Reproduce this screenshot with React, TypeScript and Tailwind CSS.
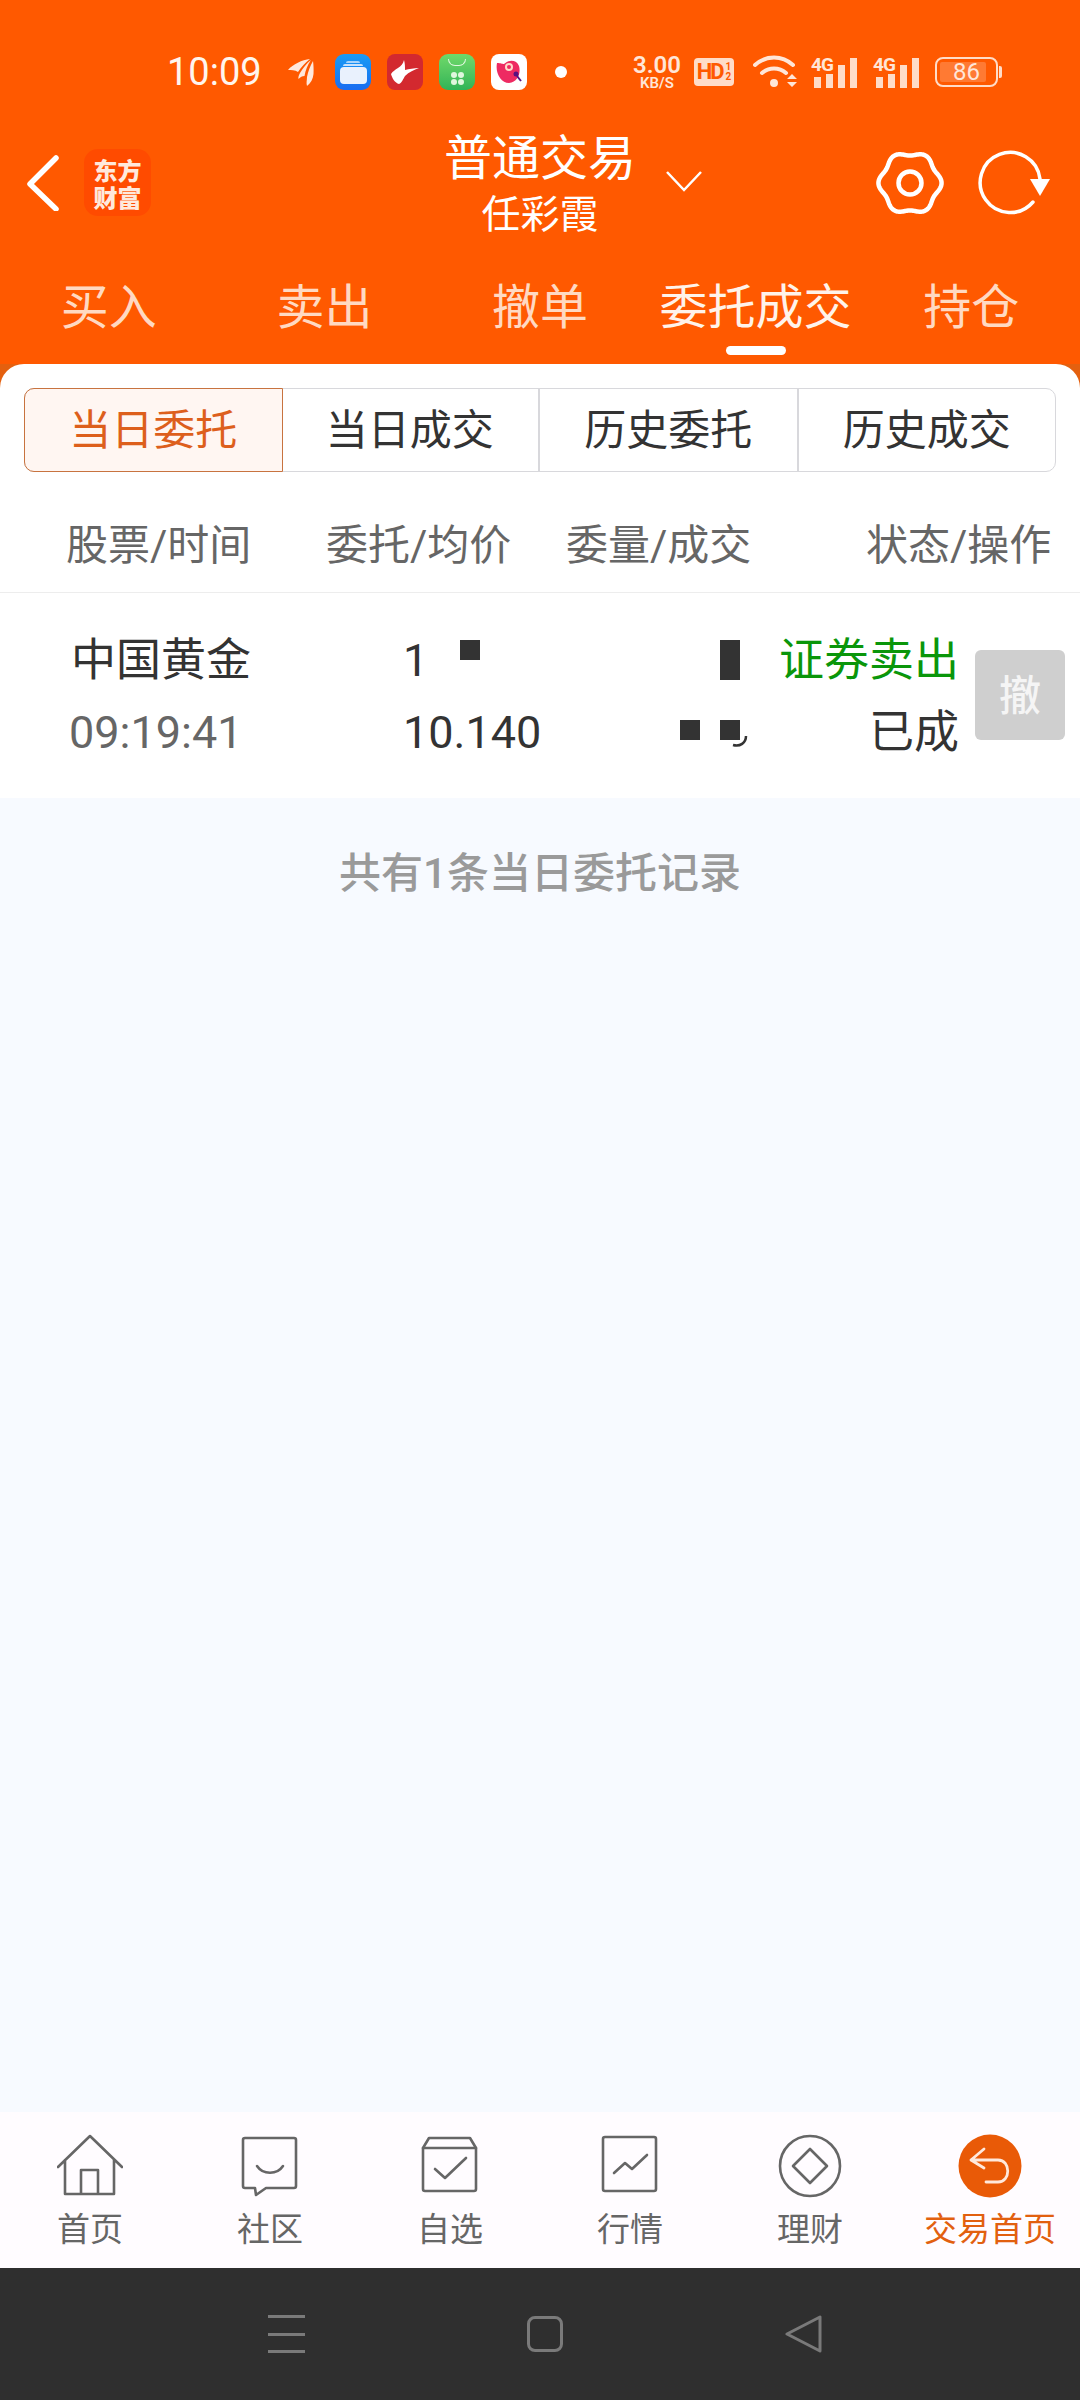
import React from "react";

const FONT = "font-['Roboto','Noto_Sans_CJK_SC',sans-serif]";

// six soft lobes, same outline as the app's settings icon
function gearPath(cx: number, cy: number, r: number, depth: number) {
  const pts: string[] = [];
  for (let i = 0; i < 180; i++) {
    const a = (i / 180) * Math.PI * 2;
    const rr = r * (1 + depth * Math.cos(6 * a));
    pts.push(`${(cx + rr * Math.cos(a)).toFixed(2)} ${(cy + rr * Math.sin(a)).toFixed(2)}`);
  }
  return `M${pts.join("L")}Z`;
}

function Signal({ className }: { className: string }) {
  return (
    <div className={`relative h-[31px] w-[46px] ${className}`}>
      <span className="absolute left-0 top-0 text-[19px] font-bold leading-[15px] tracking-[-1px] text-[#ffe6d8]">4G</span>
      <div className="absolute bottom-0 left-[3px] flex items-end gap-[5px]">
        <div className="h-[11px] w-[7px] bg-[#ffdcc8]" />
        <div className="h-[14px] w-[7px] bg-[#ffdcc8]" />
        <div className="h-[23px] w-[7px] bg-[#ffdcc8]" />
        <div className="h-[30px] w-[7px] bg-[#ffdcc8]" />
      </div>
    </div>
  );
}

function StatusBar() {
  return (
    <div className="flex h-[130px] items-center pl-[167px] pt-[14px] text-white">
      <span className="w-[96px] text-[38px] leading-none text-[#fff5ee]">10:09</span>
      <svg className="ml-[25px]" width="28" height="28" viewBox="0 0 28 28" fill="#ffe9dc">
        <path d="M22 1C14 2 5 6 0 12c3 0 7 0 10 2 3-5 7-9 12-13z" />
        <path d="M23 2c-4 3-8 8-11 13-1 2-2 4-1.500 6 2-2 3.500-3 6-3 1-6 3-11 6.500-16z" />
        <path d="M25 3c-3 5-5 11-6 16 0 3-1 6 0 9 4-3 6-7 6.500-12 .3-5 0-9-.5-13z" />
      </svg>
      <div className="ml-[19px] flex h-[36px] w-[36px] flex-col items-center justify-end rounded-[9px] bg-gradient-to-b from-[#1b9bf5] to-[#1a6cf0] pb-[6px]">
        <div className="mb-[1px] h-[2px] w-[14px] rounded-t-[2px] bg-[#a9d4fb]" />
        <div className="mb-[1px] h-[2px] w-[20px] rounded-t-[2px] bg-[#c8e2fc]" />
        <div className="h-[17px] w-[27px] rounded-[4px] bg-[#e9f1fd]" />
      </div>
      <div className="ml-[16px] flex h-[36px] w-[36px] items-center justify-center rounded-[8px] bg-[#d3292f]">
        <svg width="30" height="26" viewBox="0 0 30 26" fill="#fff">
          <path d="M14 1C13 5 11 7 8 9c-3 2-5 3-7 6 1 4 4 9 8 10 3-1 4-5 6-8 4-4 9-6 14-8-5 0-10 1-14 2 0-3 0-7-1-10z" />
        </svg>
      </div>
      <div className="ml-[16px] flex h-[36px] w-[36px] flex-col items-center rounded-[9px] bg-gradient-to-b from-[#6fd96a] to-[#2fb457] pt-[5px]">
        <div className="h-[7px] w-[18px] rounded-b-full border-x border-b border-[#dff7dd]" />
        <div className="mt-[6px] grid grid-cols-2 gap-[1px]">
          <div className="h-[6px] w-[6px] rounded-full bg-[#dff7dd]" />
          <div className="h-[6px] w-[6px] rounded-full bg-[#dff7dd]" />
          <div className="h-[6px] w-[6px] rounded-full bg-[#dff7dd]" />
          <div className="h-[6px] w-[6px] rounded-full bg-[#dff7dd]" />
        </div>
      </div>
      <div className="ml-[16px] flex h-[36px] w-[36px] items-center justify-center rounded-[8px] bg-white">
        <svg width="30" height="30" viewBox="0 0 30 30">
          <path d="M3 6c4 0 5 1 7 1 5-5 13-4 15 2 2 7-1 16-10 17C7 26 1 16 3 6z" fill="#ee2a62" />
          <circle cx="15" cy="10" r="4" fill="#ffd9c9" />
          <circle cx="15" cy="10" r="2" fill="#ee2a62" />
          <circle cx="22" cy="17" r="2.500" fill="#5a1080" />
          <path d="m23 19 4 5" stroke="#5a1080" strokeWidth="2" />
        </svg>
      </div>
      <div className="ml-[28px] h-[12px] w-[12px] rounded-full bg-white" />
      <div className="ml-[65px] flex w-[50px] flex-col items-center font-semibold text-[#ffe6d8]">
        <span className="text-[24px] leading-[22px]">3.00</span>
        <span className="text-[15px] leading-[15px]">KB/S</span>
      </div>
      <div className="ml-[12px] flex h-[28px] w-[40px] items-center justify-center rounded-[4px] bg-[#ffdcc8] text-[22px] font-bold leading-none tracking-[-2px] text-[#ff5900]">
        HD
        <span className="ml-[3px] text-[10px] leading-[10px] tracking-normal">
          1
          <br />2
        </span>
      </div>
      <svg className="ml-[19px]" width="44" height="34" viewBox="0 0 44 34" fill="none" stroke="#ffe6d8" strokeWidth="4" strokeLinecap="round">
        <path d="M2 10c11-10 27-10 38 0" />
        <path d="M9 18c7-6 17-6 24 0" />
        <circle cx="21" cy="28" r="2" fill="#ffe6d8" />
        <path d="m34 24 5-5 5 5zM34 27l5 5 5-5z" fill="#ffe6d8" stroke="none" />
      </svg>
      <Signal className="ml-[14px]" />
      <Signal className="ml-[16px]" />
      <div className="relative ml-[16px] flex h-[30px] w-[63px] items-center rounded-[8px] border-2 border-[#ffdcc8] p-[3px]">
        <div className="h-full w-[46px] rounded-[2px] bg-[#ff7a33]" />
        <span className="absolute inset-x-0 text-center text-[24px] leading-none text-[#ffe6d8]">86</span>
      </div>
      <div className="ml-[1px] h-[12px] w-[3px] rounded-r-[2px] bg-[#ffdcc8]" />
    </div>
  );
}

function Header() {
  return (
    <div className="relative flex h-[112px] items-start">
      <svg className="ml-[26px] mt-[25px]" width="34" height="56" viewBox="0 0 34 56" fill="none" stroke="#fff" strokeWidth="5.500" strokeLinecap="round" strokeLinejoin="round">
        <path d="M30 3 4 29l26 25" />
      </svg>
      <div className="ml-[24px] mt-[19px] flex h-[67px] w-[67px] items-center justify-center rounded-[14px] bg-[#ff4b00] text-center font-['Noto_Sans_CJK_SC',serif] text-[24px] font-black leading-[27px] text-[#ffe9dc]">
        东方
        <br />
        财富
      </div>
      <div className="absolute left-[440px] top-0 flex w-[200px] flex-col items-center text-white">
        <span className="text-[48px] leading-[58px]">普通交易</span>
        <span className="mt-[5px] text-[39px] leading-[44px]">任彩霞</span>
      </div>
      <svg className="absolute left-[666px] top-[41px]" width="36" height="22" viewBox="0 0 36 22" fill="none" stroke="#fff" strokeWidth="2.500">
        <path d="m1 1 17 18L35 1" />
      </svg>
      <svg className="absolute left-[876px] top-[19px]" width="68" height="68" viewBox="0 0 68 68" fill="none" stroke="#fff" strokeWidth="4.500" strokeLinejoin="round">
        <path d={gearPath(34, 34, 29.500, 0.07)} />
        <circle cx="34" cy="34" r="11.500" />
      </svg>
      <svg className="absolute left-[978px] top-[20px]" width="74" height="68" viewBox="0 0 74 68" fill="none">
        <path d="M55 52A30 30 0 1 1 62 29" stroke="#fff" strokeWidth="3.500" strokeLinecap="round" />
        <path d="M52 29h20l-10 17z" fill="#fff" />
      </svg>
    </div>
  );
}

function TopTabs() {
  const tabs = ["买入", "卖出", "撤单", "委托成交", "持仓"];
  return (
    <div className="grid h-[122px] grid-cols-5 px-[1px]">
      {tabs.map((t) => {
        const active = t === "委托成交";
        return (
          <div key={t} className="flex flex-col items-center pt-[36px]">
            <span className={`text-[48px] leading-[60px] ${active ? "text-[#fff3ea]" : "text-[#ffd9c2]"}`}>{t}</span>
            {active && <div className="mt-[8px] h-[9px] w-[60px] rounded-full bg-white" />}
          </div>
        );
      })}
    </div>
  );
}

function Segments() {
  const items = ["当日委托", "当日成交", "历史委托", "历史成交"];
  return (
    <div className="mx-[24px] flex h-[84px] rounded-[10px] border border-[#d8d8dc]">
      {items.map((t, i) => (
        <div
          key={t}
          className={`flex flex-1 items-center justify-center text-[42px] ${
            i === 0
              ? "-m-[1px] rounded-l-[10px] border border-[#c8733f] bg-[#fff6f2] text-[#dd5f1c]"
              : i === 1
                ? "text-[#333]"
                : "border-l-2 border-[#d8d8dc] text-[#333]"
          }`}
        >
          {t}
        </div>
      ))}
    </div>
  );
}

function OrderRow() {
  return (
    <div className="relative flex h-[206px] border-t border-[#ededed] bg-white text-[45px] leading-[50px] text-[#333]">
      <div className="ml-[71px] mt-[43px] flex w-[333px] flex-col gap-[22px]">
        <span>中国黄金</span>
        <span className="-ml-[2px] text-[#666]">09:19:41</span>
      </div>
      <div className="-ml-[1px] mt-[43px] flex w-[200px] flex-col gap-[22px]">
        <span>1</span>
        <span>10.140</span>
      </div>
      <div className="mt-[43px] flex w-[356px] flex-col items-end gap-[22px]">
        <span className="text-[#0a960a]">证券卖出</span>
        <span>已成</span>
      </div>
      <div className="absolute left-[975px] top-[57px] flex h-[90px] w-[90px] items-center justify-center rounded-[6px] bg-[#cfcfcf] pt-[3px] text-[42px] font-medium text-[#f5f5f5]">
        撤
      </div>
      {/* masked digits in the source capture */}
      <div className="absolute left-[460px] top-[47px] h-[20px] w-[20px] bg-[#333]" />
      <div className="absolute left-[720px] top-[47px] h-[40px] w-[20px] bg-[#333]" />
      <div className="absolute left-[680px] top-[127px] h-[20px] w-[20px] bg-[#333]" />
      <div className="absolute left-[720px] top-[127px] h-[20px] w-[20px] bg-[#333]" />
      <svg className="absolute left-[730px] top-[141px]" width="20" height="16" viewBox="0 0 20 16" fill="none" stroke="#333" strokeWidth="2.500">
        <path d="M16 2c0 7-6 11-13 9" />
      </svg>
    </div>
  );
}

function NavIcon({ name }: { name: string }) {
  const stroke = { fill: "none", stroke: "#666", strokeWidth: 2.600, strokeLinejoin: "round" as const, strokeLinecap: "round" as const };
  if (name === "首页")
    return (
      <svg width="66" height="66" viewBox="0 0 66 66" {...stroke}>
        <path d="M1 34 33 3l32 31M8 27v34h49V27M24 61V37h17v24" />
      </svg>
    );
  if (name === "社区")
    return (
      <svg width="66" height="66" viewBox="0 0 66 66" {...stroke}>
        <path d="M8 5h49a2 2 0 0 1 2 2v46a2 2 0 0 1-2 2H29l-10 7-1-7H8a2 2 0 0 1-2-2V7a2 2 0 0 1 2-2z" />
        <path d="M20 33c6 9 20 9 26 0" />
      </svg>
    );
  if (name === "自选")
    return (
      <svg width="66" height="66" viewBox="0 0 66 66" {...stroke}>
        <path d="M6 15v41a2 2 0 0 0 2 2h49a2 2 0 0 0 2-2V15z" />
        <path d="m6 15 6-10h41l6 10" />
        <path d="m18 36 10 9 21-20" />
      </svg>
    );
  if (name === "行情")
    return (
      <svg width="66" height="66" viewBox="0 0 66 66" {...stroke}>
        <rect x="6" y="4" width="53" height="54" rx="2" />
        <path d="m17 40 11-10 7 6 15-14" />
      </svg>
    );
  if (name === "理财")
    return (
      <svg width="66" height="66" viewBox="0 0 66 66" {...stroke}>
        <circle cx="33" cy="33" r="30" />
        <path d="m33 16 17 17-17 17-17-17z" />
      </svg>
    );
  return (
    <svg width="66" height="66" viewBox="0 0 66 66">
      <circle cx="33" cy="33" r="31.500" fill="#e95a07" />
      <path d="M27 16 14 27l13 8M14 27h27c13 0 13 22 0 22H29" fill="none" stroke="#ffe9dc" strokeWidth="2.800" strokeLinecap="round" strokeLinejoin="round" />
    </svg>
  );
}

function BottomNav() {
  const items = ["首页", "社区", "自选", "行情", "理财", "交易首页"];
  return (
    <div className="grid h-[156px] grid-cols-6 bg-[#fffcff]">
      {items.map((t) => (
        <div key={t} className="flex flex-col items-center">
          <div className="mt-[21px] h-[66px]">
            <NavIcon name={t} />
          </div>
          <span className={`mt-[9px] text-[33px] leading-[44px] ${t === "交易首页" ? "text-[#e2600f]" : "text-[#666]"}`}>{t}</span>
        </div>
      ))}
    </div>
  );
}

function SystemBar() {
  return (
    <div className="flex h-[132px] items-center bg-[#2f2f2f]">
      <div className="ml-[268px] flex h-[38px] w-[37px] flex-col justify-between">
        <div className="h-[3px] bg-[#7a7a7a]" />
        <div className="h-[3px] bg-[#7a7a7a]" />
        <div className="h-[3px] bg-[#7a7a7a]" />
      </div>
      <div className="ml-[222px] h-[36px] w-[36px] rounded-[8px] border-[3px] border-[#7a7a7a]" />
      <svg className="ml-[222px]" width="38" height="38" viewBox="0 0 38 38" fill="none" stroke="#7a7a7a" strokeWidth="3" strokeLinejoin="round">
        <path d="M2 19 35 2v34z" />
      </svg>
    </div>
  );
}

export default function App() {
  return (
    <div className={`flex h-[2400px] w-[1080px] flex-col overflow-hidden bg-[#f7faff] ${FONT}`}>
      <div className="bg-[#ff5900]">
        <StatusBar />
        <Header />
        <TopTabs />
      </div>
      {/* the darker orange only shows through the rounded corners */}
      <div className="bg-[#e4600f]">
        <div className="rounded-t-[24px] bg-white pt-[24px]">
          <Segments />
          <div className="grid h-[120px] grid-cols-[266px_240px_264px_1fr] items-center whitespace-nowrap pt-[26px] text-[42px] text-[#666]">
            <span className="pl-[66px]">股票/时间</span>
            <span className="pl-[60px]">委托/均价</span>
            <span className="pl-[60px]">委量/成交</span>
            <span className="pl-[96px]">状态/操作</span>
          </div>
          <OrderRow />
        </div>
      </div>
      <div className="flex-1 pt-[51px] text-center text-[42px] font-medium leading-[50px] text-[#9a9a9a]">共有1条当日委托记录</div>
      <BottomNav />
      <SystemBar />
    </div>
  );
}
